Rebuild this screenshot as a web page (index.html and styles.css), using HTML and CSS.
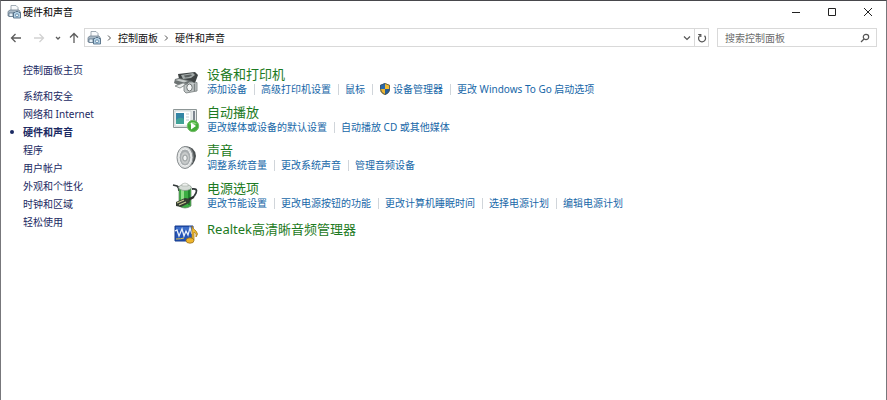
FILE: index.html
```
<!DOCTYPE html>
<html lang="zh-CN">
  <head>
    <meta charset="UTF-8" />
    <meta name="viewport" content="width=device-width, initial-scale=1.0" />
    <link rel="stylesheet" href="styles.css">

    <title>硬件和声音</title>
  </head>
  <body>
    <svg class="defs" aria-hidden="true">
      <symbol id="hardware" viewBox="0 0 14 14">
        <path d="M4 6V.5h5l2 2V6" fill="#f8fafc" stroke="#8b98a3" stroke-width=".8" />
        <path d="M1 6.5 3 5h9l1 1.5V11H1z" fill="#a9b9c6" stroke="#71828f" stroke-width=".8" />
        <path d="M2 8h4v3.500H2z" fill="#e8f1f7" stroke="#4b667d" stroke-width=".7" />
        <path d="M6.500 7.500H8l1-1h2l1 1h1.500v5.500h-7z" fill="#b5d2e6" stroke="#456179" stroke-width=".8" />
        <circle cx="10" cy="10.300" r="1.500" fill="#f5fafc" stroke="#446e91" stroke-width=".7" />
      </symbol>
    </svg>

    <div class="window">
      <header class="titlebar">
        <svg class="app-icon"><use href="#hardware" /></svg>
        <h1 class="title">硬件和声音</h1>
        <div class="controls">
          <button class="control" aria-label="最小化">
            <svg viewBox="0 0 10 10"><path d="M1 5.5h8" /></svg>
          </button>
          <button class="control" aria-label="最大化">
            <svg viewBox="0 0 10 10"><path d="M1.5 1.5h7v7h-7z" /></svg>
          </button>
          <button class="control" aria-label="关闭">
            <svg viewBox="0 0 10 10"><path d="M1 1l8 8M9 1 1 9" /></svg>
          </button>
        </div>
      </header>

      <nav class="toolbar">
        <button class="nav-btn" aria-label="后退">
          <svg viewBox="0 0 12 12"><path d="M11 6H1.5M5.500 2l-4 4 4 4" /></svg>
        </button>
        <button class="nav-btn" aria-label="前进" disabled>
          <svg viewBox="0 0 12 12"><path d="M1 6h9.5M6.500 2l4 4-4 4" /></svg>
        </button>
        <button class="nav-btn narrow" aria-label="最近浏览的位置">
          <svg viewBox="0 0 12 12"><path d="M4 5l2 2 2-2" /></svg>
        </button>
        <button class="nav-btn narrow" aria-label="上移">
          <svg viewBox="0 0 12 12"><path d="M6 11V1.5M2 5.500l4-4 4 4" /></svg>
        </button>
        <div class="address">
          <svg class="app-icon"><use href="#hardware" /></svg>
          <svg class="crumb-arrow" viewBox="0 0 6 8"><path d="M2 1.5 4.500 4 2 6.500" /></svg>
          <a class="crumb" href="#">控制面板</a>
          <svg class="crumb-arrow" viewBox="0 0 6 8"><path d="M2 1.5 4.500 4 2 6.500" /></svg>
          <a class="crumb" href="#">硬件和声音</a>
          <button class="address-btn history" aria-label="以前的位置">
            <svg viewBox="0 0 10 10"><path d="M2 3.5l3 3 3-3" /></svg>
          </button>
          <button class="address-btn refresh" aria-label="刷新">
            <svg viewBox="0 0 10 10"><path d="M7.500 2.800a3.500 3.500 0 1 1-4.500-.3M1.200 1.500h2.600v2.600" /></svg>
          </button>
        </div>
        <form class="search">
          <input class="search-input" type="search" placeholder="搜索控制面板" aria-label="搜索控制面板" />
          <svg class="search-icon" viewBox="0 0 10 10"><circle cx="6" cy="4" r="2.700" /><path d="M4 6 1 9" /></svg>
        </form>
      </nav>

      <div class="content">
        <aside class="sidebar">
          <a class="side-home" href="#">控制面板主页</a>
          <ul class="side-list">
            <li><a href="#">系统和安全</a></li>
            <li><a href="#">网络和 Internet</a></li>
            <li class="current"><a href="#">硬件和声音</a></li>
            <li><a href="#">程序</a></li>
            <li><a href="#">用户帐户</a></li>
            <li><a href="#">外观和个性化</a></li>
            <li><a href="#">时钟和区域</a></li>
            <li><a href="#">轻松使用</a></li>
          </ul>
        </aside>

        <main class="categories">
          <section class="category">
            <svg class="category-icon" viewBox="0 0 28 28">
              <path d="m6 6 17-2 3 3-3 8-5-1-11-3z" fill="#3f4444" />
              <path d="m9 7 12-2 2 2-4 3-8 1z" fill="#a3aaa9" />
              <path d="m12 7.500 7-1 1 1-3 1.500-4 .5z" fill="#5b6161" />
              <path d="m3 11 4-1 13 3v3l-14 1-4-2z" fill="#6c7272" />
              <path d="m3 12 4-1 9 2-4 1.500z" fill="#c6cbca" />
              <path d="m3 18 8-3 4 1-7 4z" fill="#eceeed" stroke="#777d7d" stroke-width=".8" />
              <path d="m12 17 3-1 2-2h4l1 1 3-.5v8.500l-11 2-2-2z" fill="#c3c8c8" stroke="#727878" stroke-width=".8" />
              <path d="M22.500 16v7" stroke="#7e8484" stroke-width="1.500" />
              <ellipse cx="17.500" cy="19.500" rx="2.700" ry="3.500" fill="#f7f8f8" stroke="#6d7373" />
            </svg>
            <div class="category-body">
              <h2 class="category-title"><a href="#">设备和打印机</a></h2>
              <ul class="tasks">
                <li><a href="#">添加设备</a></li>
                <li><a href="#">高级打印机设置</a></li>
                <li><a href="#">鼠标</a></li>
                <li>
                  <a class="admin" href="#">
                    <svg class="shield" viewBox="0 0 12 12">
                      <path d="M6 0 1 2v4q0 4 5 6z" fill="#2769ad" />
                      <path d="m6 0 5 2v4q0 4-5 6z" fill="#f2bd35" />
                      <path d="M1 6h5v6Q1 10 1 6z" fill="#eeb52e" />
                      <path d="M6 6h5q0 4-5 6z" fill="#225d9d" />
                      <path d="m6 .5 4.500 1.800V6q0 3.500-4.500 5.500Q1.500 9.500 1.500 6V2.300z" fill="none" stroke="#45535c" stroke-width=".8" />
                    </svg>设备管理器</a>
                </li>
                <li><a href="#">更改 Windows To Go 启动选项</a></li>
              </ul>
            </div>
          </section>

          <section class="category">
            <svg class="category-icon" viewBox="0 0 28 28">
              <path d="M1.500 3.500h23v18h-23z" fill="#e9eded" stroke="#8d9696" />
              <path d="M3 5h16v15H3z" fill="#fff" stroke="#c2caca" stroke-width=".7" />
              <path d="M4 7h8v11H4z" fill="#3485a5" />
              <path d="M4 14q4-4 8-1v5H4z" fill="#42a398" />
              <path d="M14 8h3M14 11h3M14 14h3" stroke="#c0c9cc" />
              <path d="M22 5v9" stroke="#596370" stroke-width="1.500" />
              <circle cx="21" cy="20" r="5.700" fill="#43ac37" stroke="#74bb69" />
              <path d="M17 18q4-4 8 0-4 1-8 0z" fill="#8bd47e" />
              <path d="m19 16.500 5 3.500-5 3.500z" fill="#fff" />
            </svg>
            <div class="category-body">
              <h2 class="category-title"><a href="#">自动播放</a></h2>
              <ul class="tasks">
                <li><a href="#">更改媒体或设备的默认设置</a></li>
                <li><a href="#">自动播放 CD 或其他媒体</a></li>
              </ul>
            </div>
          </section>

          <section class="category">
            <svg class="category-icon" viewBox="0 0 28 28">
              <path d="M12 2q11 0 12 10-1 9-9 12z" fill="#4b5051" />
              <path d="M18 4q6 8 0 18" fill="none" stroke="#777c7d" stroke-width="1.500" />
              <ellipse cx="13" cy="13.500" rx="8" ry="11" fill="#dde0e0" stroke="#898e90" />
              <ellipse cx="13" cy="13.500" rx="6" ry="8.500" fill="#a8adaf" stroke="#f4f5f5" />
              <ellipse cx="13" cy="14" rx="4" ry="6" fill="#c7caca" />
              <ellipse cx="13" cy="14" rx="2.200" ry="3" fill="#eff1f1" stroke="#7d8587" stroke-width=".8" />
            </svg>
            <div class="category-body">
              <h2 class="category-title"><a href="#">声音</a></h2>
              <ul class="tasks">
                <li><a href="#">调整系统音量</a></li>
                <li><a href="#">更改系统声音</a></li>
                <li><a href="#">管理音频设备</a></li>
              </ul>
            </div>
          </section>

          <section class="category">
            <svg class="category-icon" viewBox="0 0 28 28">
              <path d="m1 3 4 1q2 1 2 5M20 7q6-1 4 4-1 3-5 6" fill="none" stroke="#333a3b" stroke-width="1.800" />
              <path d="M7 5q6-3 12 0v19q-6 4-12 0z" fill="#3cae43" stroke="#5f8060" stroke-width=".7" />
              <path d="M9 7h3v16H9z" fill="#91df88" />
              <path d="M16 8h2v15h-2z" fill="#20822b" />
              <ellipse cx="13" cy="5.500" rx="6.300" ry="3" fill="#d5dbd6" stroke="#88938b" stroke-width=".7" />
              <path d="M10 4V2q3-2 6 0v2z" fill="#edf0ed" stroke="#9da49f" stroke-width=".5" />
              <path d="m4 20 9-4 6 1-2 4-8 4-5-1z" fill="#343d31" />
              <path d="m5 21 7-3M7 23l7-3" stroke="#c8c794" stroke-width="1.200" />
              <path d="m17 17 5-2" stroke="#2b302d" stroke-width="2" />
            </svg>
            <div class="category-body">
              <h2 class="category-title"><a href="#">电源选项</a></h2>
              <ul class="tasks">
                <li><a href="#">更改节能设置</a></li>
                <li><a href="#">更改电源按钮的功能</a></li>
                <li><a href="#">更改计算机睡眠时间</a></li>
                <li><a href="#">选择电源计划</a></li>
                <li><a href="#">编辑电源计划</a></li>
              </ul>
            </div>
          </section>

          <section class="category single">
            <svg class="category-icon" viewBox="0 0 28 28">
              <path d="M3 6h18v15H3z" fill="#2453b6" stroke="#173c8c" />
              <path d="M4 7h16v3H4z" fill="#3b6cc8" />
              <path d="m3 11 2-1 2 6 3-7 2 7 2-5 2 4 2-7 2 6" fill="none" stroke="#e6eefb" stroke-width="1.300" />
              <path d="M4 19q5 0 8-1" fill="none" stroke="#e2c347" />
              <path d="M20 20V6q1 3 4 5 3 3 0 6 1-4-2-5v8" fill="#f2bd32" stroke="#a97b1a" stroke-width=".8" />
              <ellipse cx="18" cy="20.500" rx="4" ry="2.700" fill="#efb52a" stroke="#98701f" stroke-width=".8" />
            </svg>
            <div class="category-body">
              <h2 class="category-title"><a href="#">Realtek高清晰音频管理器</a></h2>
            </div>
          </section>
        </main>
      </div>
    </div>
  </body>
</html>
```
FILE: styles.css
```
* {
  box-sizing: border-box;
}

body {
  margin: 0;
  font-family: "Noto Sans", "Noto Sans CJK SC", sans-serif;
  font-size: 10px;
  line-height: 14px;
  color: #222;
  background: #fff;
}

a {
  color: inherit;
  text-decoration: none;
}

.tasks a:hover,
.category-title a:hover,
.sidebar a:hover {
  text-decoration: underline;
}

button {
  display: flex;
  align-items: center;
  justify-content: center;
  padding: 0;
  border: 0;
  background: none;
}

ul {
  margin: 0;
  padding: 0;
  list-style: none;
}

svg {
  flex: none;
}

.defs {
  display: none;
}

.window {
  min-height: 100vh;
  border: 1px solid #77777b;
  border-top-color: #48484c;
  border-bottom: 0;
}

.app-icon {
  width: 14px;
  height: 14px;
}

/* title bar */
.titlebar {
  display: flex;
  align-items: center;
  height: 22px;
  padding-left: 6px;
}

.title {
  flex: 1;
  margin: 0 0 0 2px;
  font-size: 10px;
  font-weight: normal;
  color: #000;
}

.controls {
  display: flex;
}

.control {
  width: 36px;
  height: 22px;
}

.control svg {
  width: 10px;
  height: 10px;
  fill: none;
  stroke: #222;
}

/* navigation and address bar */
.toolbar {
  display: flex;
  align-items: center;
  padding: 5px 9px 4px 3px;
}

.nav-btn {
  width: 23px;
  height: 18px;
}

.narrow {
  width: 16px;
}

.nav-btn svg {
  width: 12px;
  height: 12px;
  fill: none;
  stroke: #5c5c5c;
  stroke-width: 1.3;
}

.nav-btn:disabled svg {
  stroke: #d2d2d2;
}

.address {
  display: flex;
  flex: 1;
  align-items: center;
  height: 19px;
  margin-left: 2px;
  padding-left: 2px;
  border: 1px solid #d9d9d9;
}

.crumb-arrow {
  width: 6px;
  height: 8px;
  margin: 0 6px 0 5px;
  fill: none;
  stroke: #555;
}

.crumb {
  color: #111;
}

.address-btn {
  width: 14px;
  height: 17px;
}

.address-btn svg {
  width: 10px;
  height: 10px;
  fill: none;
  stroke: #555;
  stroke-width: 1.2;
}

.history {
  margin-left: auto;
}

.refresh {
  border-left: 1px solid #d9d9d9;
}

.search {
  display: flex;
  align-items: center;
  width: 160px;
  height: 19px;
  margin-left: 8px;
  padding: 0 6px 0 7px;
  border: 1px solid #d9d9d9;
}

.search-input {
  flex: 1;
  min-width: 0;
  padding: 0;
  border: 0;
  outline: 0;
  font: inherit;
  background: none;
}

.search-input::placeholder {
  color: #6d6d6d;
}

.search-icon {
  width: 10px;
  height: 10px;
  fill: none;
  stroke: #555;
  stroke-width: 1.2;
}

/* page */
.content {
  display: flex;
  padding: 10px 8px;
}

.sidebar {
  width: 163px;
  padding-left: 14px;
  line-height: 18px;
  color: #1b2a63;
}

.side-home {
  display: block;
  margin-bottom: 8px;
}

.current {
  position: relative;
  font-weight: bold;
}

.current::before {
  content: "";
  position: absolute;
  top: 7px;
  left: -13px;
  width: 4px;
  height: 4px;
  border-radius: 50%;
  background: #1b2a63;
}

.categories {
  flex: 1;
  padding-top: 5px;
}

.category {
  display: flex;
  gap: 7px;
  margin-bottom: 8px;
}

.category-icon {
  width: 28px;
  height: 28px;
  margin-top: 2px;
}

.category-title {
  margin: 0;
  font-size: 13px;
  line-height: 16px;
  font-weight: normal;
  color: #1c7a22;
}

.single .category-title {
  line-height: 22px;
}

.tasks {
  display: flex;
  color: #1767a8;
}

.tasks li + li {
  display: flex;
  align-items: center;
}

.tasks li + li::before {
  content: "";
  width: 1px;
  height: 11px;
  margin: 0 6px 0 7px;
  background: #d0d5da;
}

.admin {
  display: flex;
  align-items: center;
  gap: 2px;
}

.shield {
  width: 12px;
  height: 12px;
}
```
